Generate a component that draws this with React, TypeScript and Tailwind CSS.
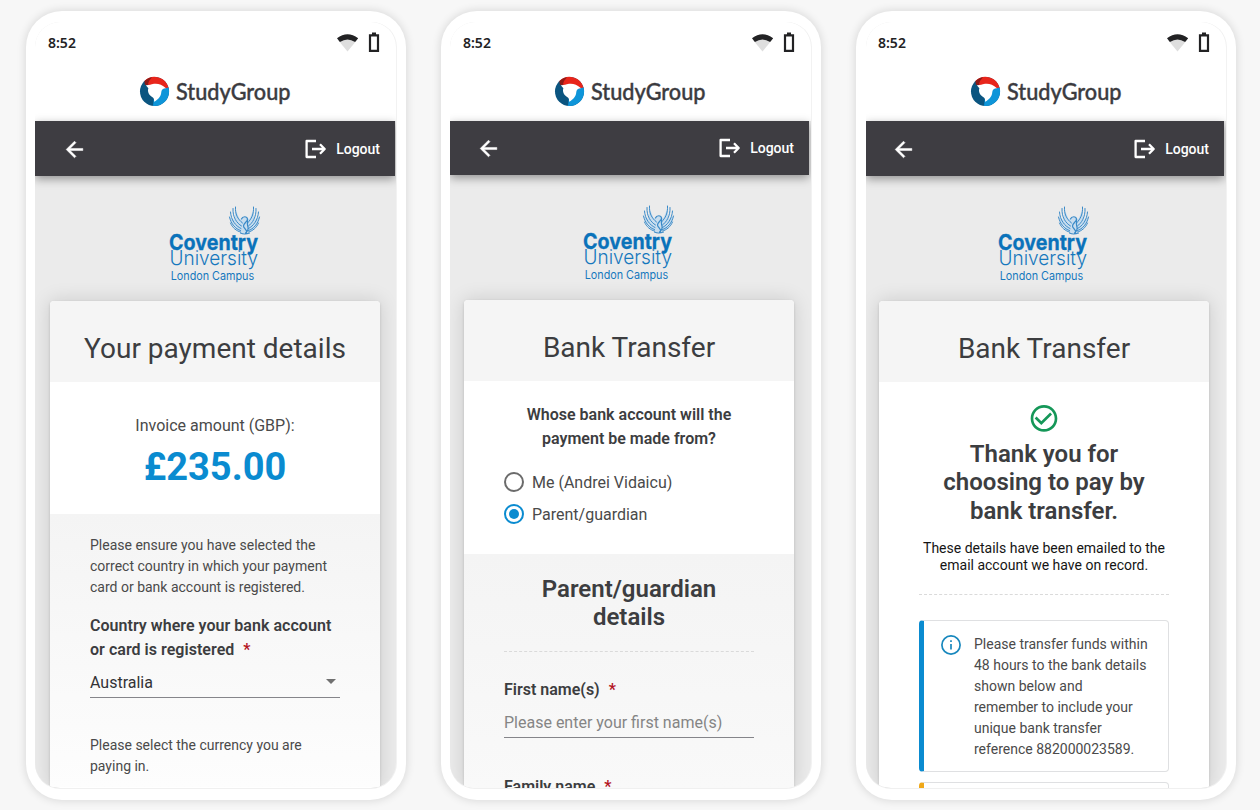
import React from "react";

type Variant = {
  screen: string;
  status: string;
  bar: string;
  back: string;
  actions: string;
  campus: string;
  card: string;
};

const first: Variant = {
  screen: "ml-[9px] w-[361px]",
  status: "pl-[13px] pr-[15px]",
  bar: "w-[360px] h-[55px]",
  back: "pl-[27px] pt-[1px]",
  actions: "pr-[15px] pt-[1px]",
  campus: "h-[125px] pl-[134px] pt-[29px]",
  card: "ml-[15px]",
};

const second: Variant = {
  screen: "ml-[9px] w-[361px]",
  status: "pl-[13px] pr-[15px]",
  bar: "w-[359px] h-[54px]",
  back: "pl-[26px]",
  actions: "pr-[15px]",
  campus: "h-[125px] pl-[133px] pt-[29px]",
  card: "ml-[14px]",
};

const third: Variant = {
  screen: "ml-[10px] w-[360px]",
  status: "pl-[12px] pr-[15px]",
  bar: "w-[358px] h-[55px]",
  back: "pl-[25px] pt-[1px]",
  actions: "pr-[15px] pt-[1px]",
  campus: "h-[125px] pl-[132px] pt-[29px]",
  card: "ml-[13px]",
};

function StudyGroupLogo() {
  return (
    <svg width="152" height="32" viewBox="0 0 152 32" className="block overflow-visible">
      <g transform="translate(0 2)">
        <circle cx="14.500" cy="14.500" r="14.500" fill="#0b5580" />
        <path d="M14.500 14.500L4.500 4A14.500 14.500 0 0 1 28.700 11.200Z" fill="#e8251b" />
        <path d="M4.500 4Q8 0.700 12 0.300Q8.500 3.500 7.500 8.500L4.800 7.500Z" fill="#8e1a16" />
        <path d="M28.600 10.500A14.500 14.500 0 0 1 13 28.900L14 20L21 12Z" fill="#0e95d9" />
        <path d="M5.800 8.300C9 8.500 10.500 7.200 14 6.800C18 6.300 22 7.500 26 11.200C23 11.200 21.500 12.600 21.300 15C21.100 19 18.600 22.500 14 24.800C14.300 22.500 14 21.200 12.500 20.200C8.500 18 7.300 14 8.400 11.200Z" fill="white" />
      </g>
      <text x="36" y="25" textLength="114.500" lengthAdjust="spacingAndGlyphs" fill="#3b3b3f" stroke="#3b3b3f" strokeWidth="0.400" className="font-['Lato',sans-serif] text-[23px] font-medium">
        StudyGroup
      </text>
    </svg>
  );
}

function CoventryLogo() {
  return (
    <svg width="92" height="78" viewBox="0 0 92 78" className="block overflow-visible">
      <g transform="translate(0.500 0)">
        <path d="M60 12C63 22 68 27 74 28H76C83 27 88 22 90 12L85 15L84 4L80 14L75 12L70 14L66 4L65 15Z" fill="#c8ddee" />
        <g fill="none" stroke="#3a8ac8" strokeWidth="1" strokeLinecap="round">
          <path d="M66 2C65.500 9 68 14 73 18M63.500 3.500C63 12 67 18 72 21M61 7C61.500 15 66 21 71.500 23.500M60 12C61.500 19 66 24 71 25.500M61 18C63 23 67 26 71 27" />
          <path d="M84 2C84.500 9 82 14 78 18M86.500 3.500C87 12 83 18 79 21M89 7C88.500 15 84 21 79 23.500M90 12C88.500 19 84 24 79 25.500M89 18C87 23 83 26 79 27" />
          <path d="M72 14C73 11 77.500 11 78 14C78 17 74 18 74 21C74 24 78 24 77 28M78 14V20C79 23 79 26 76 28M71 28Q75 30 80 28" strokeWidth="1.200" />
        </g>
      </g>
      <text x="0" y="44.800" textLength="89" lengthAdjust="spacingAndGlyphs" fill="#0a72ba" stroke="#0a72ba" strokeWidth="0.300" className="font-['Inter',sans-serif] text-[22px] font-bold">Coventry</text>
      <text x="0.500" y="60" textLength="88.500" lengthAdjust="spacingAndGlyphs" fill="#1678bd" className="font-['Inter',sans-serif] text-[20px] font-light">University</text>
      <text x="1.700" y="74.500" textLength="83.500" lengthAdjust="spacingAndGlyphs" fill="#1678bd" className="font-['Inter',sans-serif] text-[11.500px]">London Campus</text>
    </svg>
  );
}

function StatusIcons() {
  return (
    <svg width="44" height="22" viewBox="0.5 0 44 22" className="block">
      <path d="M1.500 8L11 19.500L20.500 8Q11 2 1.500 8Z" fill="#dedede" />
      <path d="M0.500 6.300Q11 -2 21.700 6.300L18.600 10Q11 4.800 3.400 10Z" fill="#222224" />
      <path d="M35.500 0.500H39.500V2.300H42.600V20H32.400V2.300H35.500ZM34.600 4.600V17.800H40.400V4.600Z" fill="#222224" fillRule="evenodd" />
    </svg>
  );
}

function Phone({ v, title, children }: { v: Variant; title: string; children: React.ReactNode }) {
  return (
    <section className="h-[789px] w-[380px] shrink-0 rounded-[36px] bg-white pt-[11px] shadow-[0_0_9px_1px_rgba(0,0,0,0.12)]">
      <div className={`flex h-[766px] flex-col overflow-hidden rounded-[25px] bg-[#ebebeb] shadow-[1px_0_0_#f2f2f2,0_1px_0_#f0f0f0] ${v.screen}`}>
        <div className="h-[99px] shrink-0 bg-white">
          <div className={`flex h-[42px] items-center justify-between ${v.status}`}>
            <span className="font-['Noto_Sans',sans-serif] text-[14px] leading-[20px] font-semibold text-[#222224]">8:52</span>
            <StatusIcons />
          </div>
          <div className="flex pt-[11px] pl-[105px]">
            <StudyGroupLogo />
          </div>
        </div>
        <div className={`z-10 flex shrink-0 items-center justify-between bg-[#3e3d42] shadow-[0_3px_9px_rgba(0,0,0,0.38)] ${v.bar}`}>
          <div className={v.back}>
            <svg width="25" height="25" viewBox="0 0 24 24" fill="white" stroke="white" strokeWidth="0.500" className="block">
              <path d="M20 11H7.830l5.590-5.590L12 4l-8 8 8 8 1.410-1.410L7.830 13H20z" />
            </svg>
          </div>
          <div className={`flex items-center gap-[9px] ${v.actions}`}>
            <svg width="22" height="20" viewBox="0 0 22 20" className="block" fill="none" stroke="white" strokeWidth="2.300" strokeLinejoin="round">
              <path d="M11 2H1.600V18H11M7 10H19.500M15 5.300L19.700 10L15 14.700" />
            </svg>
            <span className="text-[14px] leading-[20px] font-medium text-white">Logout</span>
          </div>
        </div>
        <div className={`shrink-0 ${v.campus}`}>
          <CoventryLogo />
        </div>
        <main className={`min-h-0 w-[330px] flex-1 rounded-t-[4px] bg-white shadow-[0_0_20px_rgba(0,0,0,0.14),0_1px_3px_rgba(0,0,0,0.14)] ${v.card}`}>
          <h1 className="h-[81px] rounded-t-[4px] bg-[#f5f5f5] pt-[31px] text-center text-[28px] leading-[34px] text-[#3c3d40]">
            {title}
          </h1>
          {children}
        </main>
      </div>
    </section>
  );
}

function Required() {
  return <span className="ml-[9px] text-[#b3141f]">*</span>;
}

function PaymentDetails() {
  return (
    <Phone v={first} title="Your payment details">
      <div className="h-[132px] pt-[32px] text-center">
        <p className="text-[16px] leading-[24px] text-[#4a4a4a]">Invoice amount (GBP):</p>
        <p className="mt-[7px] text-[38px] leading-[44px] font-bold text-[#0a8bd0]">£235.00</p>
      </div>
      <div className="h-[273px] bg-linear-to-b from-[#f4f4f4] to-[#fdfdfd] px-[40px] pt-[21px] text-[#4a4a4a]">
        <p className="text-[14px] leading-[21px] whitespace-nowrap">
          Please ensure you have selected the<br />correct country in which your payment<br />card or bank account is registered.
        </p>
        <p className="mt-[16px] text-[16px] leading-[24px] font-semibold tracking-[0.035px] whitespace-nowrap text-[#3c3d40]">
          Country where your bank account<br />or card is registered<Required />
        </p>
        <div className="mt-[3px] flex h-[33px] w-[250px] items-center justify-between border-b border-[#85858a] pt-[3px] pr-[4px]">
          <span className="text-[16px] leading-[24px] text-[#333336]">Australia</span>
          <svg width="10" height="5" viewBox="0 0 10 5" className="mb-[2px] block"><path d="M0 0H10L5 5Z" fill="#707070" /></svg>
        </div>
        <p className="mt-[37px] text-[14px] leading-[21px] whitespace-nowrap">
          Please select the currency you are<br />paying in.
        </p>
      </div>
    </Phone>
  );
}

function GuardianForm() {
  return (
    <Phone v={second} title="Bank Transfer">
      <div className="h-[173px] px-[40px] pt-[22px]">
        <p className="text-center text-[16px] leading-[24px] font-semibold whitespace-nowrap text-[#3c3d40]">
          Whose bank account will the<br />payment be made from?
        </p>
        <div className="mt-[21px] flex h-[20px] items-center gap-[8px]">
          <span className="size-[20px] rounded-full border-2 border-[#6b6b6b]" />
          <span className="pt-[2px] text-[16px] leading-[20px] text-[#4a4a4a]">Me (Andrei Vidaicu)</span>
        </div>
        <div className="mt-[12px] flex h-[20px] items-center gap-[8px]">
          <span className="flex size-[20px] items-center justify-center rounded-full border-2 border-[#0a8bd0]">
            <span className="size-[10px] rounded-full bg-[#0a8bd0]" />
          </span>
          <span className="pt-[2px] text-[16px] leading-[20px] text-[#4a4a4a]">Parent/guardian</span>
        </div>
      </div>
      <div className="h-[234px] overflow-hidden bg-linear-to-b from-[#f4f4f4] to-[#f9f9f9] px-[40px] pt-[21px]">
        <h2 className="text-center text-[24px] leading-[28px] font-semibold text-[#3c3d40]">Parent/guardian<br />details</h2>
        <div className="mt-[20px] border-t border-dashed border-[#dadada]" />
        <p className="mt-[26px] text-[16px] leading-[24px] font-semibold text-[#3c3d40]">First name(s)<Required /></p>
        <div className="mt-[4px] h-[32px] border-b border-[#85858a] pt-[5px] text-[16px] leading-[24px] text-[#858585]">
          Please enter your first name(s)
        </div>
        <p className="mt-[37px] text-[16px] leading-[24px] font-semibold text-[#3c3d40]">Family name<Required /></p>
      </div>
    </Phone>
  );
}

function Confirmation() {
  return (
    <Phone v={third} title="Bank Transfer">
      <div className="flex flex-col px-[40px] pt-[20px]">
        <svg width="32" height="32" viewBox="0 0 24 24" fill="#159758" className="mx-auto block">
          <path transform="translate(0 0.3)" d="M16.590 7.580L10 14.170l-3.590-3.580L5 12l5 5 8-8zM12 2C6.480 2 2 6.480 2 12s4.480 10 10 10 10-4.480 10-10S17.520 2 12 2zm0 18c-4.420 0-8-3.580-8-8s3.580-8 8-8 8 3.580 8 8-3.580 8-8 8z" />
        </svg>
        <h2 className="mt-[5.5px] text-center text-[24px] leading-[28.500px] font-semibold whitespace-nowrap text-[#3c3d40]">
          Thank you for<br />choosing to pay by<br />bank transfer.
        </h2>
        <p className="mt-[14.5px] text-center text-[14px] leading-[17px] whitespace-nowrap text-[#151515]">
          These details have been emailed to the<br />email account we have on record.
        </p>
        <div className="mt-[20px] border-t border-dashed border-[#dadada]" />
        <div className="mt-[25px] flex h-[152px] w-[250px] shrink-0 overflow-hidden rounded-[4px] border border-l-[5px] border-[#dfe0e2] border-l-[#0a8bd0] pt-[13px] pl-[17px]">
          <svg width="20" height="20" viewBox="0 0 20 20" className="mt-[1px] block shrink-0" fill="none" stroke="#1787bd" strokeWidth="1.700">
            <circle cx="10" cy="10" r="9.100" />
            <path d="M10 9V14.500M10 5.200V7" />
          </svg>
          <p className="ml-[13px] text-[14px] leading-[21px] whitespace-nowrap text-[#4a4a4a]">
            Please transfer funds within<br />48 hours to the bank details<br />shown below and<br />remember to include your<br />unique bank transfer<br />reference 882000023589.
          </p>
        </div>
        <div className="mt-[10px] h-[40px] w-[250px] shrink-0 rounded-[4px] border border-l-[5px] border-[#dfe0e2] border-l-[#f0a818]" />
      </div>
    </Phone>
  );
}

export default function App() {
  return (
    <div className="flex h-[810px] w-[1260px] gap-[35px] overflow-hidden bg-[#f7f7f7] pt-[11px] pl-[26px] font-['Roboto',sans-serif]">
      <PaymentDetails />
      <GuardianForm />
      <Confirmation />
    </div>
  );
}
